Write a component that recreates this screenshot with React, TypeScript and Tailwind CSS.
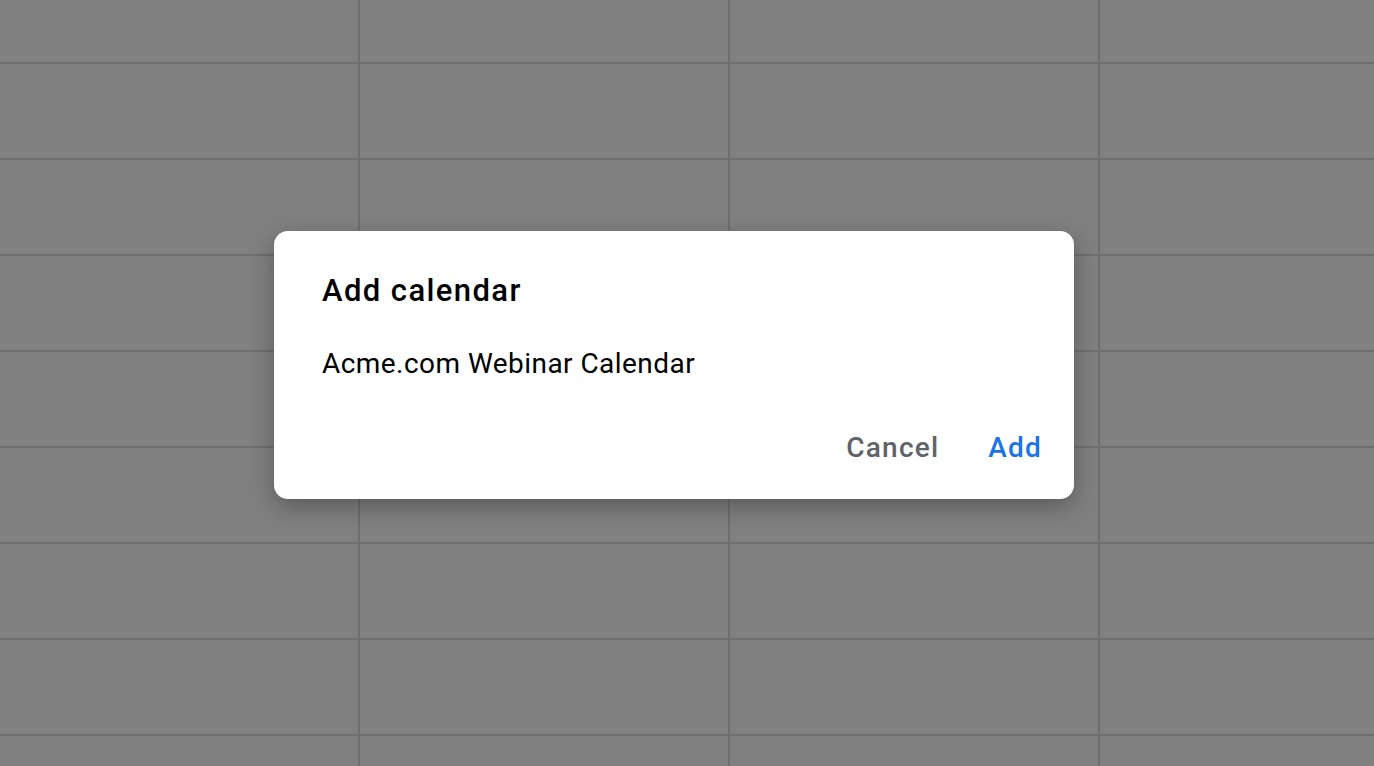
import React from "react";

export default function App() {
  const cols = [0, 1, 2, 3];
  const rows = Array.from({ length: 9 });
  return (
    <div className="relative w-[1374px] h-[766px] overflow-hidden bg-[#6f6f6f]" style={{ fontFamily: "Roboto, 'Noto Sans', sans-serif" }}>
      <div className="grid grid-cols-[358px_368px_368px_1fr] grid-rows-[62px_repeat(8,94px)] gap-[2px] h-full">
        {rows.map((_, r) =>
          cols.map((c) => <div key={`${r}-${c}`} className="bg-[#808080]" />)
        )}
      </div>
      <div className="absolute left-[274px] top-[231px] w-[800px] h-[268px] bg-white rounded-[14px] shadow-[0_8px_24px_rgba(0,0,0,0.3)] flex flex-col">
        <div className="pl-[48px] pt-[41px] text-[31px] leading-[38px] font-medium text-[#000] tracking-[1.4px]">
          Add calendar
        </div>
        <div className="pl-[48px] pt-[38px] text-[28px] leading-[32px] text-[#000] tracking-[0.45px]">
          Acme.com Webinar Calendar
        </div>
        <div className="flex justify-end items-center gap-[49px] pr-[32px] mt-[52px]">
          <span className="text-[28px] leading-[32px] font-medium text-[#5f6368] tracking-[1.2px]">Cancel</span>
          <span className="text-[28px] leading-[32px] font-medium text-[#1a73e8] tracking-[1.2px]">Add</span>
        </div>
      </div>
    </div>
  );
}
